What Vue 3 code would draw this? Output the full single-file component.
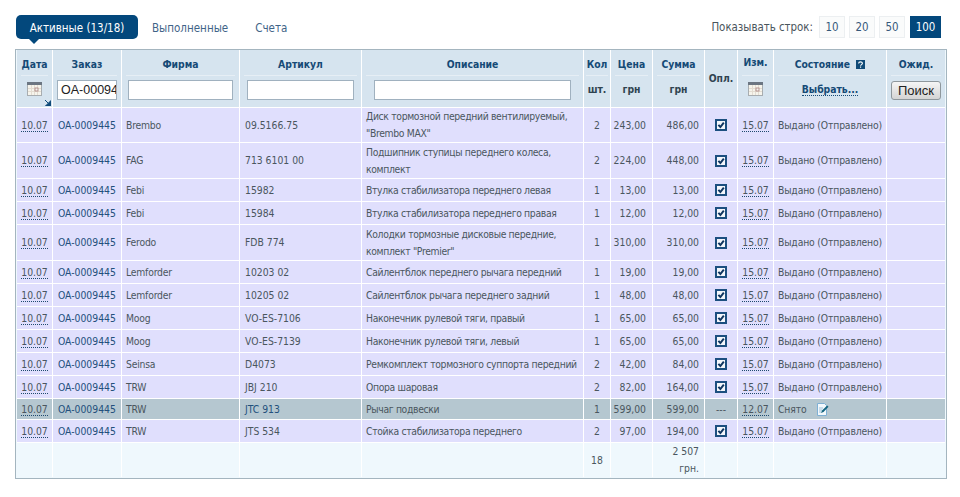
<script setup>
const cols = [36, 69, 118, 122, 222, 27, 42, 52, 33, 36, 113, 58]
const done = 'Выдано (Отправлено)'
const rows = [
  { h: 35, firm: 'Brembo', art: '09.5166.75', desc: 'Диск тормозной передний вентилируемый,\n"Brembo MAX"', q: 2, p: '243,00', s: '486,00' },
  { h: 36, firm: 'FAG', art: '713 6101 00', desc: 'Подшипник ступицы переднего колеса,\nкомплект', q: 2, p: '224,00', s: '448,00' },
  { h: 23, firm: 'Febi', art: '15982', desc: 'Втулка стабилизатора переднего левая', q: 1, p: '13,00', s: '13,00' },
  { h: 23, firm: 'Febi', art: '15984', desc: 'Втулка стабилизатора переднего правая', q: 1, p: '12,00', s: '12,00' },
  { h: 36, firm: 'Ferodo', art: 'FDB 774', desc: 'Колодки тормозные дисковые передние,\nкомплект "Premier"', q: 1, p: '310,00', s: '310,00' },
  { h: 23, firm: 'Lemforder', art: '10203 02', desc: 'Сайлентблок переднего рычага передний', q: 1, p: '19,00', s: '19,00' },
  { h: 23, firm: 'Lemforder', art: '10205 02', desc: 'Сайлентблок рычага переднего задний', q: 1, p: '48,00', s: '48,00' },
  { h: 23, firm: 'Moog', art: 'VO-ES-7106', desc: 'Наконечник рулевой тяги, правый', q: 1, p: '65,00', s: '65,00' },
  { h: 23, firm: 'Moog', art: 'VO-ES-7139', desc: 'Наконечник рулевой тяги, левый', q: 1, p: '65,00', s: '65,00' },
  { h: 23, firm: 'Seinsa', art: 'D4073', desc: 'Ремкомплект тормозного суппорта передний', q: 2, p: '42,00', s: '84,00' },
  { h: 23, firm: 'TRW', art: 'JBJ 210', desc: 'Опора шаровая', q: 2, p: '82,00', s: '164,00' },
  { h: 21, firm: 'TRW', art: 'JTC 913', desc: 'Рычаг подвески', q: 1, p: '599,00', s: '599,00', removed: true },
  { h: 23, firm: 'TRW', art: 'JTS 534', desc: 'Стойка стабилизатора переднего', q: 2, p: '97,00', s: '194,00' },
]
</script>

<template>
  <div class="page">
    <div class="topbar">
      <nav class="tabs">
        <a class="tab active">Активные (13/18)</a>
        <a class="tab">Выполненные</a>
        <a class="tab">Счета</a>
      </nav>
      <div class="pager">
        <span class="pager-label">Показывать строк:</span>
        <a class="pg">10</a>
        <a class="pg">20</a>
        <a class="pg">50</a>
        <a class="pg on">100</a>
      </div>
    </div>

    <div class="frame">
      <table class="grid">
        <colgroup>
          <col v-for="(c, i) in cols" :key="i" :style="{ width: c + 'px' }" />
        </colgroup>
        <thead>
          <tr class="h1">
            <th><span class="ht">Дата</span></th>
            <th><span class="ht">Заказ</span></th>
            <th><span class="ht">Фирма</span></th>
            <th><span class="ht">Артикул</span></th>
            <th><span class="ht">Описание</span></th>
            <th><span class="ht tight">Кол</span></th>
            <th><span class="ht">Цена</span></th>
            <th><span class="ht">Сумма</span></th>
            <th rowspan="2" class="opl">Опл.</th>
            <th><span class="ht up">Изм.</span></th>
            <th>
              <span class="ht">Состояние
                <svg class="help" viewBox="0 0 9 9" width="9" height="9"><rect width="9" height="9" fill="#0f4a78" /><path d="M2.600 3.400c0-2.100 3.800-2.100 3.800 0 0 1.200-1.800 1.200-1.800 2.400M4.600 6.600v1.200" stroke="#fff" stroke-width="1.100" fill="none" /></svg>
              </span>
            </th>
            <th><span class="ht">Ожид.</span></th>
          </tr>
          <tr class="h2">
            <th class="rel">
              <svg class="cal" viewBox="0 0 15 14" width="15" height="14">
                <rect x="0.500" y="0.500" width="14" height="13" fill="#f6f4ec" stroke="#a8adb0" />
                <rect x="0" y="0" width="15" height="3" fill="#6c7682" />
                <path d="M1 6.500h13M1 9.500h13M4.500 3v10M7.500 3v10M10.500 3v10" stroke="#e4ddd2" />
                <rect x="8" y="6" width="3" height="3" fill="#f6f4ee" stroke="#a9817e" stroke-width="0.800" />
              </svg>
              <svg class="corner" viewBox="0 0 6 6" width="6" height="6"><path d="M6 0.500V6H0.500zM0 0l3.500 3.500" stroke="#0f4a78" fill="#0f4a78" /></svg>
            </th>
            <th><input class="inp order" value="OA-0009445" /></th>
            <th><input class="inp firm" /></th>
            <th><input class="inp art" /></th>
            <th><input class="inp desc" /></th>
            <th class="unit">шт.</th>
            <th class="unit">грн</th>
            <th class="unit">грн</th>
            <th>
              <svg class="cal" viewBox="0 0 15 14" width="15" height="14">
                <rect x="0.500" y="0.500" width="14" height="13" fill="#f6f4ec" stroke="#a8adb0" />
                <rect x="0" y="0" width="15" height="3" fill="#6c7682" />
                <path d="M1 6.500h13M1 9.500h13M4.500 3v10M7.500 3v10M10.500 3v10" stroke="#e4ddd2" />
                <rect x="8" y="6" width="3" height="3" fill="#f6f4ee" stroke="#a9817e" stroke-width="0.800" />
              </svg>
            </th>
            <th class="unit"><a class="choose">Выбрать...</a></th>
            <th><button class="search">Поиск</button></th>
          </tr>
        </thead>
        <tbody>
          <tr v-for="(r, i) in rows" :key="i" :class="{ removed: r.removed }" :style="{ height: r.h + 'px' }">
            <td class="c"><span class="dot">10.07</span></td>
            <td class="pl5"><a class="lnk">OA-0009445</a></td>
            <td class="pl fm">{{ r.firm }}</td>
            <td class="pl5"><a v-if="r.removed" class="lnk">{{ r.art }}</a><template v-else>{{ r.art }}</template></td>
            <td class="pl dsc">{{ r.desc }}</td>
            <td class="c">{{ r.q }}</td>
            <td class="rp">{{ r.p }}</td>
            <td class="rs">{{ r.s }}</td>
            <td class="c">
              <template v-if="r.removed">---</template>
              <svg v-else class="chk" viewBox="0 0 12 12" width="12" height="12">
                <rect width="12" height="12" fill="#1c4f80" />
                <rect x="2" y="2" width="8" height="8" fill="#f4f7fb" />
                <path d="M3.400 5.800l2 2.200L8.800 3.600" stroke="#0f3560" stroke-width="2" fill="none" />
              </svg>
            </td>
            <td class="c"><span class="dot">{{ r.removed ? '12.07' : '15.07' }}</span></td>
            <td class="pl st">
              <template v-if="r.removed">
                Снято
                <svg class="edit" viewBox="0 0 13 13" width="13" height="13">
                  <path d="M1.500 .5h7l2 2v10h-9z" fill="#f3f8fc" stroke="#7fb0d4" />
                  <path d="M3 5h4M3 7h3M3 9h2" stroke="#9cc0da" />
                  <path d="M5 10l1-2.500L11.200 2.500l1.300 1.300L7.500 9z" fill="#14657f" />
                </svg>
              </template>
              <template v-else>{{ done }}</template>
            </td>
            <td></td>
          </tr>
        </tbody>
        <tfoot>
          <tr class="foot">
            <td></td><td></td><td></td><td></td><td></td>
            <td class="c">18</td>
            <td></td>
            <td class="rs">2 507<br />грн.</td>
            <td></td><td></td><td></td><td></td>
          </tr>
        </tfoot>
      </table>
    </div>
  </div>
</template>

<style scoped>
.page {
  width: 960px;
  height: 497px;
  overflow: hidden;
  background: #fff;
  font-family: "DejaVu Sans", sans-serif;
  font-stretch: condensed;
  font-size: 10.3px;
  color: #4a565e;
}
.topbar {
  display: flex;
  justify-content: space-between;
  align-items: center;
  padding: 15px 19px 0 16px;
  height: 24px;
}
.tabs { display: flex; align-items: center; height: 24px; }
.tab {
  font-size: 11.5px;
  color: #3f6488;
  margin-right: 27px;
  line-height: 26px;
  height: 24px;
}
.tab.active {
  position: relative;
  background: #03487c;
  color: #fff;
  border-radius: 5px;
  width: 122px;
  text-align: center;
  margin-right: 14px;
}
.tab.active::after {
  content: "";
  position: absolute;
  left: 13px;
  top: 24px;
  border: 5px solid transparent;
  border-top-color: #03487c;
  border-bottom-width: 0;
}
.pager { display: flex; align-items: center; gap: 4px; font-size: 11.4px; }
.pager-label { margin-right: 2px; color: #4a555c; }
.pg {
  box-sizing: border-box;
  width: 26px;
  height: 22px;
  line-height: 20px;
  text-align: center;
  border: 1px solid #eceff1;
  background: #fafbfb;
  color: #35587a;
}
.pg.on {
  width: 31px;
  margin-left: 1px;
  background: #03487c;
  border-color: #03487c;
  color: #fff;
}
.frame {
  box-sizing: border-box;
  width: 932px;
  height: 430px;
  margin: 10px 0 0 15px;
  border: 1px solid #a4b5bf;
  padding: 0 1px;
  background: #eff8fd;
}
.grid {
  table-layout: fixed;
  border-collapse: separate;
  border-spacing: 0;
  width: 928px;
}
th, td {
  padding: 0;
  border-right: 1px solid #fff;
  border-bottom: 1px solid #fff;
  vertical-align: middle;
  overflow: hidden;
  white-space: nowrap;
  line-height: 17px;
  font-weight: 400;
}
th:last-child, td:last-child { border-right: 0; }
th {
  background: #d6e4ef;
  text-align: center;
  color: #154a76;
  font-weight: 700;
  font-size: 10.3px;
}
.h1 th { height: 27px; border-bottom: 0; vertical-align: top; }
.h2 th { height: 30px; }
.h1 th.opl { border-bottom: 1px solid #fff; vertical-align: middle; color: #2f4350; }
.ht {
  display: block;
  margin: 0 4px;
  height: 25px;
  line-height: 29px;
  border-bottom: 1px solid #e6eef5;
}
.ht.tight { margin: 0 2px; }
.ht.up { line-height: 24px; }
.help { vertical-align: -1px; margin-left: 3px; }
.rel { position: relative; }
.cal { display: block; margin: -6px auto 0; }
.corner { position: absolute; right: 1px; bottom: 1px; }
.inp {
  display: block;
  box-sizing: border-box;
  height: 20px;
  margin: -4px auto 0;
  padding: 0 0 0 3px;
  border: 1px solid #a0b1bf;
  background: #fff;
  font-family: "Liberation Sans", sans-serif;
  font-size: 12.5px;
  color: #222;
  outline: 0;
}
.order { width: 60px; }
.firm { width: 105px; }
.art { width: 107px; }
.desc { width: 197px; }
.unit { color: #2f4350; }
.h2 th.unit { line-height: 14px; padding-bottom: 7px; height: 23px; }
.choose {
  color: #154a76;
  border-bottom: 1px dotted #154a76;
}
.search {
  display: block;
  box-sizing: border-box;
  width: 50px;
  height: 19px;
  margin: -4px auto 0;
  padding: 0;
  border: 1px solid #8e979c;
  border-radius: 3px;
  background: linear-gradient(#f5f5f5, #d4d4d4);
  font-family: "Liberation Sans", sans-serif;
  font-size: 13px;
  color: #222;
}
tbody td { background: #e0dffd; }
tbody tr.removed td { background: #b5c7d0; }
.foot td { background: #eff8fd; height: 34px; border-bottom: 0; }
.c { text-align: center; }
.pl { padding-left: 4px; }
.pl5 { padding-left: 5px; }
.fm { letter-spacing: -0.2px; }
.st { letter-spacing: -0.15px; }
.rp { text-align: right; padding-right: 6px; }
.rs { text-align: right; padding-right: 5px; }
.dsc { white-space: pre; letter-spacing: -0.33px; }
.dot { border-bottom: 1px dotted #1f4a6e; line-height: 12px; display: inline-block; }
.lnk { color: #23507c; }
.chk { display: block; margin: 0 auto; }
.edit { vertical-align: -3px; margin-left: 7px; }
</style>
